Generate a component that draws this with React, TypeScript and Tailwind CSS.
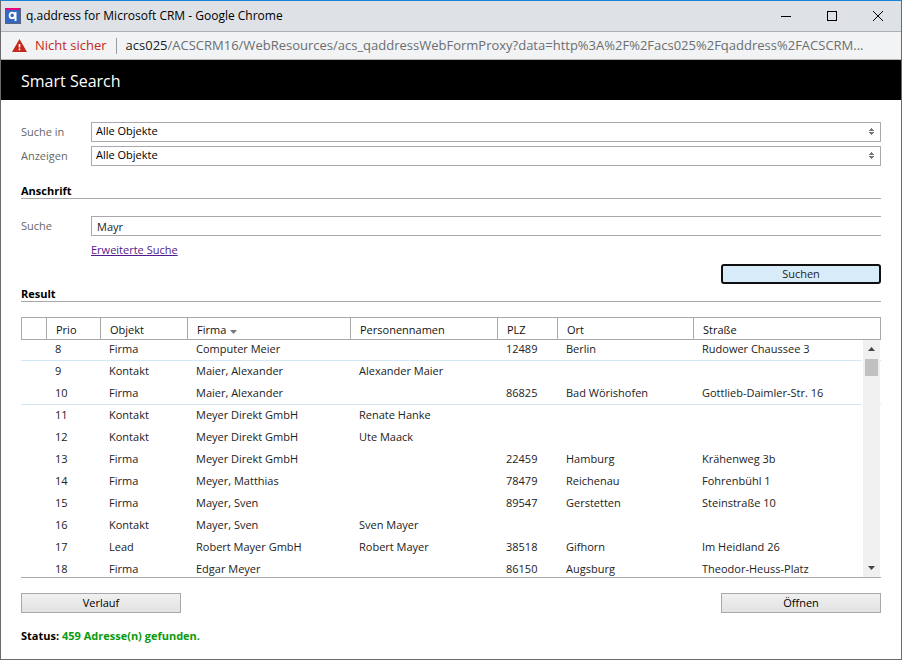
import { useState } from 'react';

type Row = {
  prio: number;
  objekt: string;
  firma: string;
  person?: string;
  plz?: string;
  ort?: string;
  strasse?: string;
  divider?: boolean;
};

const rows: Row[] = [
  { prio: 8, objekt: 'Firma', firma: 'Computer Meier', plz: '12489', ort: 'Berlin', strasse: 'Rudower Chaussee 3', divider: true },
  { prio: 9, objekt: 'Kontakt', firma: 'Maier, Alexander', person: 'Alexander Maier' },
  { prio: 10, objekt: 'Firma', firma: 'Maier, Alexander', plz: '86825', ort: 'Bad Wörishofen', strasse: 'Gottlieb-Daimler-Str. 16', divider: true },
  { prio: 11, objekt: 'Kontakt', firma: 'Meyer Direkt GmbH', person: 'Renate Hanke' },
  { prio: 12, objekt: 'Kontakt', firma: 'Meyer Direkt GmbH', person: 'Ute Maack' },
  { prio: 13, objekt: 'Firma', firma: 'Meyer Direkt GmbH', plz: '22459', ort: 'Hamburg', strasse: 'Krähenweg 3b' },
  { prio: 14, objekt: 'Firma', firma: 'Meyer, Matthias', plz: '78479', ort: 'Reichenau', strasse: 'Fohrenbühl 1' },
  { prio: 15, objekt: 'Firma', firma: 'Mayer, Sven', plz: '89547', ort: 'Gerstetten', strasse: 'Steinstraße 10' },
  { prio: 16, objekt: 'Kontakt', firma: 'Mayer, Sven', person: 'Sven Mayer' },
  { prio: 17, objekt: 'Lead', firma: 'Robert Mayer GmbH', person: 'Robert Mayer', plz: '38518', ort: 'Gifhorn', strasse: 'Im Heidland 26' },
  { prio: 18, objekt: 'Firma', firma: 'Edgar Meyer', plz: '86150', ort: 'Augsburg', strasse: 'Theodor-Heuss-Platz' },
];

const columns = [
  { label: '', width: 'w-[25px]' },
  { label: 'Prio', width: 'w-[54px]' },
  { label: 'Objekt', width: 'w-[87px]' },
  { label: 'Firma', width: 'w-[163px]', sorted: true },
  { label: 'Personennamen', width: 'w-[147px]' },
  { label: 'PLZ', width: 'w-[60px]' },
  { label: 'Ort', width: 'w-[136px]' },
  { label: 'Straße', width: '' },
];

function TitleBar() {
  return (
    <div className="flex h-[31px] shrink-0 items-center border-b border-[#adafb2] bg-[#dee1e6] pl-1 text-black">
      <svg className="mb-px h-4 w-4 shrink-0" viewBox="0 0 16 16">
        <rect width="16" height="16" fill="#5b6378" />
        <rect width="15" height="15" fill="#3567c2" />
        <rect width="15" height="2" fill="#e5007d" />
        <ellipse cx="7.2" cy="7.4" rx="2.6" ry="2.7" fill="none" stroke="#fff" strokeWidth="1.8" />
        <path d="M9.6 4h1.9v9H9.6z" fill="#fff" />
      </svg>
      <span className="ml-[5px] flex-1 truncate text-xs">q.address for Microsoft CRM - Google Chrome</span>
      <button type="button" aria-label="Minimieren" className="flex h-full w-[46px] items-center justify-center">
        <svg className="h-[10px] w-[10px]" viewBox="0 0 10 10" stroke="#000" shapeRendering="crispEdges">
          <path d="M0 5.5h10" />
        </svg>
      </button>
      <button type="button" aria-label="Maximieren" className="flex h-full w-[46px] items-center justify-center">
        <svg className="h-[10px] w-[10px]" viewBox="0 0 10 10" fill="none" stroke="#000" shapeRendering="crispEdges">
          <path d="M.5.5h9v9h-9z" />
        </svg>
      </button>
      <button type="button" aria-label="Schließen" className="flex h-full w-[46px] items-center justify-center">
        <svg className="h-[10px] w-[10px]" viewBox="0 0 10 10" stroke="#000">
          <path d="M0 0l10 10M10 0L0 10" />
        </svg>
      </button>
    </div>
  );
}

function AddressBar() {
  return (
    <div className="flex h-7 shrink-0 items-center border-b border-[#b2b4b6] bg-[#f1f3f4] pl-[11px] pr-3 text-[13px]">
      <svg className="mb-px h-[13px] w-[15px] shrink-0" viewBox="0 0 15 13">
        <path d="M7.5 0L15 13H0z" fill="#c5281c" />
        <path d="M6.7 5h1.6v3.4H6.7zM6.7 9.6h1.6v1.6H6.7z" fill="#fff" />
      </svg>
      <span className="ml-2 shrink-0 text-[#c5281c]">Nicht sicher</span>
      <span className="mx-[9px] h-4 w-px shrink-0 bg-[#9a9da1]" />
      <span className="truncate text-[#6b6e72]">
        <span className="text-[#202124]">acs025</span>
        /ACSCRM16/WebResources/acs_qaddressWebFormProxy?data=http%3A%2F%2Facs025%2Fqaddress%2FACSCRM...
      </span>
    </div>
  );
}

function SelectField({ id, label }: { id: string; label: string }) {
  return (
    <div className="flex h-5 items-center">
      <label htmlFor={id} className="w-[70px] shrink-0 text-[#666]">
        {label}
      </label>
      <div className="relative flex-1">
        <select id={id} className="block h-5 w-full appearance-none border border-[#a8a8ad] bg-white pb-px pl-1 text-black outline-none">
          <option>Alle Objekte</option>
        </select>
        <svg className="pointer-events-none absolute right-[7px] top-[6px] h-[7px] w-[5px]" viewBox="0 0 5 7" fill="#777" shapeRendering="crispEdges">
          <path d="M2 0h1v1h1v1h1v1H0V2h1V1h1zM0 4h5v1H4v1H3v1H2V6H1V5H0z" />
        </svg>
      </div>
    </div>
  );
}

function SectionTitle({ children }: { children: string }) {
  return <h2 className="h-[17px] border-b border-[#a8a8ad] font-bold leading-[18px] text-black">{children}</h2>;
}

function ResultTable() {
  return (
    <div className="relative mt-[15px] min-h-0 flex-1 overflow-hidden border-b border-[#a8a8ad]">
      <table className="w-full table-fixed border-separate border-spacing-0 text-left">
        <thead>
          <tr>
            {columns.map((col) => (
              <th
                key={col.label}
                scope="col"
                className={`h-[23px] border-y border-l border-[#a8a8ad] pl-[9px] pt-[3px] pb-0 font-normal leading-4 text-[#111] last:border-r ${col.width}`}
              >
                {col.label}
                {col.sorted && (
                  <svg className="ml-1 inline-block h-[6px] w-[7px]" viewBox="0 0 7 6" fill="#777">
                    <path d="M0 2h7L3.5 6z" />
                  </svg>
                )}
              </th>
            ))}
          </tr>
        </thead>
        <tbody className="whitespace-nowrap text-[#222]">
          {rows.map((row) => {
            const cells = ['', row.prio, row.objekt, row.firma, row.person, row.plz, row.ort, row.strasse];
            return (
              <tr key={row.prio} className="group">
                {cells.map((cell, i) => (
                  <td
                    key={i}
                    className={`h-[22px] border-b pt-0 pb-[2px] pl-[9px] leading-4 group-first:h-[21px] ${row.divider ? 'border-[#d3e8f6]' : 'border-transparent'}`}
                  >
                    {cell}
                  </td>
                ))}
              </tr>
            );
          })}
        </tbody>
      </table>

      {/* Scrollbar */}
      <div className="absolute bottom-0 right-px top-[23px] flex w-[19px] flex-col items-center border-l-2 border-white bg-[#f0f0f0]">
        <svg className="mb-2 mt-[7px] h-1 w-[7px] shrink-0" viewBox="0 0 7 4" fill="#444">
          <path d="M3.5 0L7 4H0z" />
        </svg>
        <div className="h-[17px] w-[13px] bg-[#c1c1c1]" />
        <svg className="mb-[7px] mt-auto h-1 w-[7px] shrink-0" viewBox="0 0 7 4" fill="#444">
          <path d="M0 0h7L3.5 4z" />
        </svg>
      </div>
    </div>
  );
}

export default function App() {
  const [query, setQuery] = useState('Mayr');

  return (
    <div className="flex h-screen flex-col border border-[#6b6b6e] border-t-[#1883d7] bg-white font-['Open_Sans','Noto_Sans',sans-serif]">
      <TitleBar />
      <AddressBar />
      <header className="flex h-10 shrink-0 items-center bg-black px-5 pt-[2px]">
        <h1 className="text-base text-white">Smart Search</h1>
      </header>

      <main className="flex min-h-0 flex-1 flex-col px-5 pb-[15px] pt-[22px] text-[11px]">
        <div className="mb-4 flex flex-col gap-1">
          <SelectField id="suche-in" label="Suche in" />
          <SelectField id="anzeigen" label="Anzeigen" />
        </div>

        <SectionTitle>Anschrift</SectionTitle>
        <div className="mt-[17px] flex h-5 items-center">
          <label htmlFor="suche" className="w-[70px] shrink-0 text-[#666]">
            Suche
          </label>
          <input
            id="suche"
            type="text"
            value={query}
            onChange={(e) => setQuery(e.target.value)}
            className="h-5 min-w-0 flex-1 border border-r-0 border-[#a8a8ad] bg-white pl-[5px] pt-px text-[#222] outline-none"
          />
        </div>
        <div className="my-[6px] pl-[70px] leading-4">
          <a href="#erweitert" className="text-[#551a8b] underline">
            Erweiterte Suche
          </a>
        </div>
        <button type="button" className="mb-px h-5 w-40 shrink-0 self-end rounded-[3px] border-2 border-[#101010] bg-[#d7ebf9] leading-4 text-[#222]">
          Suchen
        </button>

        <SectionTitle>Result</SectionTitle>
        <ResultTable />

        <div className="my-[15px] flex justify-between">
          <button type="button" className="h-5 w-40 border border-[#a8a8ad] bg-linear-to-b from-[#f0f0f0] to-[#e2e2e2] text-black">
            Verlauf
          </button>
          <button type="button" className="h-5 w-40 border border-[#a8a8ad] bg-linear-to-b from-[#f0f0f0] to-[#e2e2e2] text-black">
            Öffnen
          </button>
        </div>
        <p className="font-bold leading-4 text-black">
          Status: <span className="text-[#0a9a0a]">459 Adresse(n) gefunden.</span>
        </p>
      </main>
    </div>
  );
}
